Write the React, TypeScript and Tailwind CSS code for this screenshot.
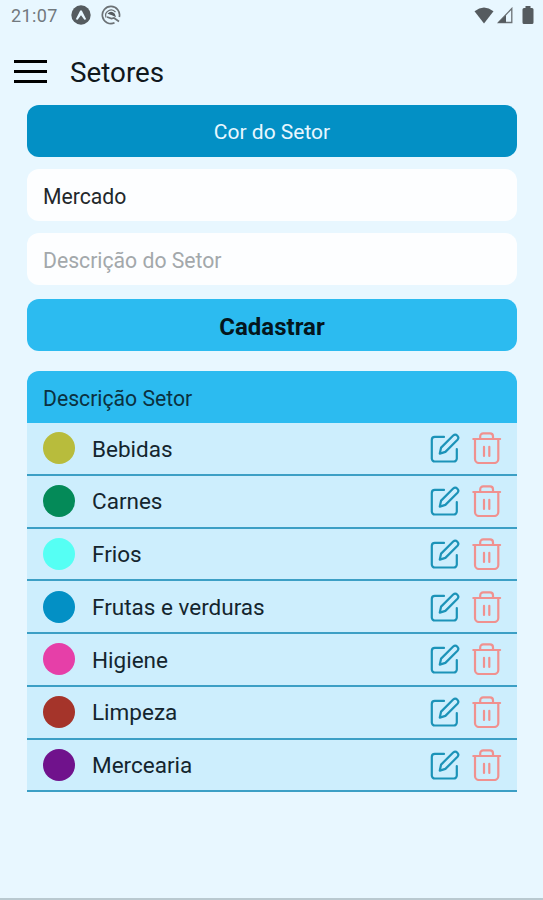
type Sector = {
  id: number;
  name: string;
  color: string;
};

const sectors: Sector[] = [
  { id: 1, name: "Bebidas", color: "bg-[#b8bc3c]" },
  { id: 2, name: "Carnes", color: "bg-[#048a58]" },
  { id: 3, name: "Frios", color: "bg-[#55fff4]" },
  { id: 4, name: "Frutas e verduras", color: "bg-[#0390c5]" },
  { id: 5, name: "Higiene", color: "bg-[#e63fa8]" },
  { id: 6, name: "Limpeza", color: "bg-[#a5342a]" },
  { id: 7, name: "Mercearia", color: "bg-[#70128c]" },
];

function EditIcon() {
  return (
    <svg width="30" height="32" viewBox="0 0 30 32" fill="none" stroke="#1c93b8" strokeWidth="2.2" strokeLinecap="round" strokeLinejoin="round">
      <path d="M14 4.900H4.800a3 3 0 0 0-3 3V26.500a3 3 0 0 0 3 3h19a3 3 0 0 0 3-3V17" />
      <path d="M9.800 21.600l1.300-6L23.200 3.500a3.050 3.050 0 0 1 4.300 4.300L15.400 19.900z" />
    </svg>
  );
}

function TrashIcon() {
  return (
    <svg width="30" height="32" viewBox="0 0 30 32" fill="none" stroke="#f0918f" strokeWidth="2.2" strokeLinecap="round" strokeLinejoin="round">
      <path d="M1.300 7h26.800" />
      <path d="M8.200 6.800V4.400a3 3 0 0 1 3-3h6.800a3 3 0 0 1 3 3v2.400" />
      <path d="M3 7.300V27a4 4 0 0 0 4 4h15.300a4 4 0 0 0 4-4V7.300" />
      <path d="M12 14.800v9.200M17.300 14.800v9.200" />
    </svg>
  );
}

function StatusBar() {
  return (
    <div className="flex h-[30px] items-center justify-between pl-[11px] pr-[9px] text-[#72797e]">
      <div className="flex items-center">
        <span className="w-[60px] pt-px text-[18px] leading-none tracking-[0.4px]">21:07</span>
        <svg width="20" height="20" viewBox="0 0 20 20">
          <circle cx="10" cy="10" r="9.700" fill="#555b5f" />
          <path d="M4.800 14.200L9.100 5.800q.9-1 1.800 0L15.200 14.200l-1.800.5L10 10.200l-3.400 4.500z" fill="#e8f7ff" />
        </svg>
        <svg width="20" height="20" viewBox="0 0 20 20" className="ml-[10px]" fill="none" stroke="#6b7175" strokeWidth="1.700">
          <path d="M13.500 17.800A8.600 8.600 0 1 1 18.300 12" />
          <path d="M5 12.500A5.500 5.500 0 0 1 14.500 7.200" strokeWidth="1.300" />
          <path d="M6.500 8.800q3.500-4 7.300 0l1.200 3.400-4-2z" fill="#555b5f" stroke="none" />
          <path d="M6 12l4.500 1.500 2.500-.5 5 3.500" />
        </svg>
      </div>
      <div className="flex items-center">
        <svg width="20" height="17" viewBox="0 0 20 17">
          <path d="M.5 4.200Q10-3 19.500 4.200L10 16.500z" fill="#555b5f" />
        </svg>
        <svg width="16" height="17" viewBox="0 0 16 17" className="ml-[3px]">
          <path d="M1.500 15.500L14.800 1.500v14z" fill="none" stroke="#6b7175" strokeWidth="1.300" />
          <path d="M1 15.800L9 8v7.800z" fill="#555b5f" />
        </svg>
        <svg width="12" height="18" viewBox="0 0 12 18" className="ml-[9px]">
          <path d="M3.500 0h5v2H10a1.500 1.500 0 0 1 1.500 1.500v13A1.500 1.500 0 0 1 10 18H2a1.500 1.500 0 0 1-1.500-1.500v-13A1.500 1.500 0 0 1 2 2h1.500z" fill="#555b5f" />
        </svg>
      </div>
    </div>
  );
}

function SectorTable() {
  return (
    <div className="mt-5 overflow-hidden rounded-t-xl">
      <div className="flex h-[52px] items-center bg-[#2cbbf0] px-4 pt-[3px] text-[21.200px] text-[#0b3140]">
        Descrição Setor
      </div>
      {sectors.map((sector) => (
        <div key={sector.id} className="flex h-[52.750px] items-center border-b-2 border-[#3c9fc5] bg-[#cdeefd] pl-4 pr-[15px]">
          <div className={`size-8 rounded-full ${sector.color}`} />
          <span className="ml-[17px] flex-1 pt-[2px] text-[22.500px] text-[#14252e]">{sector.name}</span>
          <button>
            <EditIcon />
          </button>
          <button className="ml-3">
            <TrashIcon />
          </button>
        </div>
      ))}
    </div>
  );
}

export default function App() {
  return (
    <div className="h-[900px] overflow-hidden border-b-2 border-[#b9c9d0] bg-[#e8f7ff] font-['Roboto',sans-serif]">
      <StatusBar />
      <header className="flex h-[75px] items-center pl-[14px] pt-[9px]">
        <button className="flex flex-col gap-[7px] pb-px">
          <span className="h-[3px] w-[33px] bg-black" />
          <span className="h-[3px] w-[33px] bg-black" />
          <span className="h-[3px] w-[33px] bg-black" />
        </button>
        <h1 className="ml-[23px] pt-[2px] text-[27.800px] text-[#10181c]">Setores</h1>
      </header>
      <main className="pl-[27px] pr-[26px]">
        <button className="block h-[52px] w-full rounded-xl bg-[#0390c5] pt-[3px] text-[21px] text-[#e8f7ff]">Cor do Setor</button>
        <input className="mt-3 block h-[52px] w-full rounded-xl bg-[#fdfeff] px-4 pt-[2px] text-[21.200px] text-[#23282b]" defaultValue="Mercado" />
        <input className="mt-3 block h-[52px] w-full rounded-xl bg-[#fdfeff] px-4 pt-[2px] text-[21.200px] placeholder:text-[#a3a8ab]" placeholder="Descrição do Setor" />
        <button className="mt-[14px] block h-[52px] w-full rounded-xl bg-[#2cbbf0] pt-[3px] text-[24px] font-bold text-[#04161d]">Cadastrar</button>
        <SectorTable />
      </main>
    </div>
  );
}
